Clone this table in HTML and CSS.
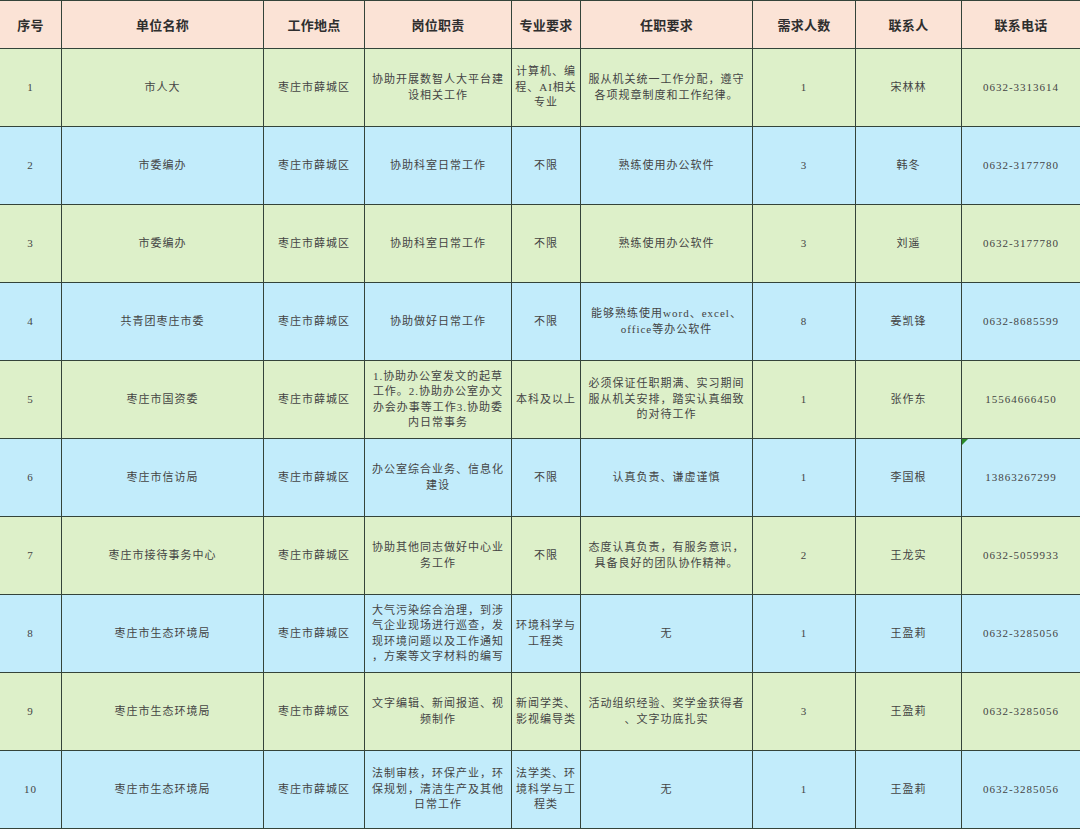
FILE: index.html
```html
<!DOCTYPE html>
<html lang="zh">
<head>
<meta charset="utf-8">
<title>岗位表</title>
<link rel="stylesheet" href="styles.css">
</head>
<body>
<table class="jobs">
  <colgroup>
    <col class="c1"><col class="c2"><col class="c3"><col class="c4"><col class="c5"><col class="c6"><col class="c7"><col class="c8"><col class="c9">
  </colgroup>
  <thead>
    <tr class="head">
      <th>序号</th><th>单位名称</th><th>工作地点</th><th>岗位职责</th><th>专业要求</th><th>任职要求</th><th>需求人数</th><th>联系人</th><th>联系电话</th>
    </tr>
  </thead>
  <tbody>
    <tr class="green">
      <td>1</td><td>市人大</td><td>枣庄市薛城区</td><td>协助开展数智人大平台建<br>设相关工作</td><td>计算机、编<br>程、AI相关<br>专业</td><td>服从机关统一工作分配，遵守<br>各项规章制度和工作纪律。</td><td>1</td><td>宋林林</td><td>0632-3313614</td>
    </tr>
    <tr class="blue">
      <td>2</td><td>市委编办</td><td>枣庄市薛城区</td><td>协助科室日常工作</td><td>不限</td><td>熟练使用办公软件</td><td>3</td><td>韩冬</td><td>0632-3177780</td>
    </tr>
    <tr class="green">
      <td>3</td><td>市委编办</td><td>枣庄市薛城区</td><td>协助科室日常工作</td><td>不限</td><td>熟练使用办公软件</td><td>3</td><td>刘遥</td><td>0632-3177780</td>
    </tr>
    <tr class="blue">
      <td>4</td><td>共青团枣庄市委</td><td>枣庄市薛城区</td><td>协助做好日常工作</td><td>不限</td><td>能够熟练使用word、excel、<br>office等办公软件</td><td>8</td><td>姜凯锋</td><td>0632-8685599</td>
    </tr>
    <tr class="green">
      <td>5</td><td>枣庄市国资委</td><td>枣庄市薛城区</td><td>1.协助办公室发文的起草<br>工作。2.协助办公室办文<br>办会办事等工作3.协助委<br>内日常事务</td><td>本科及以上</td><td>必须保证任职期满、实习期间<br>服从机关安排，踏实认真细致<br>的对待工作</td><td>1</td><td>张作东</td><td>15564666450</td>
    </tr>
    <tr class="blue">
      <td>6</td><td>枣庄市信访局</td><td>枣庄市薛城区</td><td>办公室综合业务、信息化<br>建设</td><td>不限</td><td>认真负责、谦虚谨慎</td><td>1</td><td>李国根</td><td class="note">13863267299</td>
    </tr>
    <tr class="green">
      <td>7</td><td>枣庄市接待事务中心</td><td>枣庄市薛城区</td><td>协助其他同志做好中心业<br>务工作</td><td>不限</td><td>态度认真负责，有服务意识，<br>具备良好的团队协作精神。</td><td>2</td><td>王龙实</td><td>0632-5059933</td>
    </tr>
    <tr class="blue">
      <td>8</td><td>枣庄市生态环境局</td><td>枣庄市薛城区</td><td>大气污染综合治理，到涉<br>气企业现场进行巡查，发<br>现环境问题以及工作通知<br>，方案等文字材料的编写</td><td>环境科学与<br>工程类</td><td>无</td><td>1</td><td>王盈莉</td><td>0632-3285056</td>
    </tr>
    <tr class="green">
      <td>9</td><td>枣庄市生态环境局</td><td>枣庄市薛城区</td><td>文字编辑、新闻报道、视<br>频制作</td><td>新闻学类、<br>影视编导类</td><td>活动组织经验、奖学金获得者<br>、文字功底扎实</td><td>3</td><td>王盈莉</td><td>0632-3285056</td>
    </tr>
    <tr class="blue">
      <td>10</td><td>枣庄市生态环境局</td><td>枣庄市薛城区</td><td>法制审核，环保产业，环<br>保规划，清洁生产及其他<br>日常工作</td><td>法学类、环<br>境科学与工<br>程类</td><td>无</td><td>1</td><td>王盈莉</td><td>0632-3285056</td>
    </tr>
  </tbody>
</table>
</body>
</html>
```

FILE: styles.css
```css
html, body {
  margin: 0;
  padding: 0;
  background: #ffffff;
}

.jobs {
  border-collapse: collapse;
  table-layout: fixed;
  width: 1081px;
  margin-left: -1px;
  font-family: "Liberation Serif", "Noto Sans CJK SC", serif;
}

.c1 { width: 62px; }
.c2 { width: 202px; }
.c3 { width: 101px; }
.c4 { width: 147px; }
.c5 { width: 69px; }
.c6 { width: 172px; }
.c7 { width: 103px; }
.c8 { width: 106px; }
.c9 { width: 119px; }

.jobs th,
.jobs td {
  border: 1px solid #34443a;
  text-align: center;
  vertical-align: middle;
  white-space: nowrap;
  padding: 0 1px;
  overflow: hidden;
}

.jobs th {
  height: 47px;
  background: #fbe3d6;
  color: #2e2e2e;
  font-family: "Noto Sans CJK SC", sans-serif;
  font-size: 13px;
  font-weight: 700;
  letter-spacing: 0.3px;
}

.jobs td {
  height: 77px;
  color: #444444;
  font-size: 11px;
  line-height: 15.5px;
  letter-spacing: 1px;
}

.green td { background: #ddf0c9; }
.blue td { background: #c2ecfb; }

.jobs td.note {
  position: relative;
}

.jobs td.note::before {
  content: "";
  position: absolute;
  left: 0;
  top: 0;
  width: 0;
  height: 0;
  border-top: 6px solid #2a8a2a;
  border-right: 6px solid transparent;
}
```
